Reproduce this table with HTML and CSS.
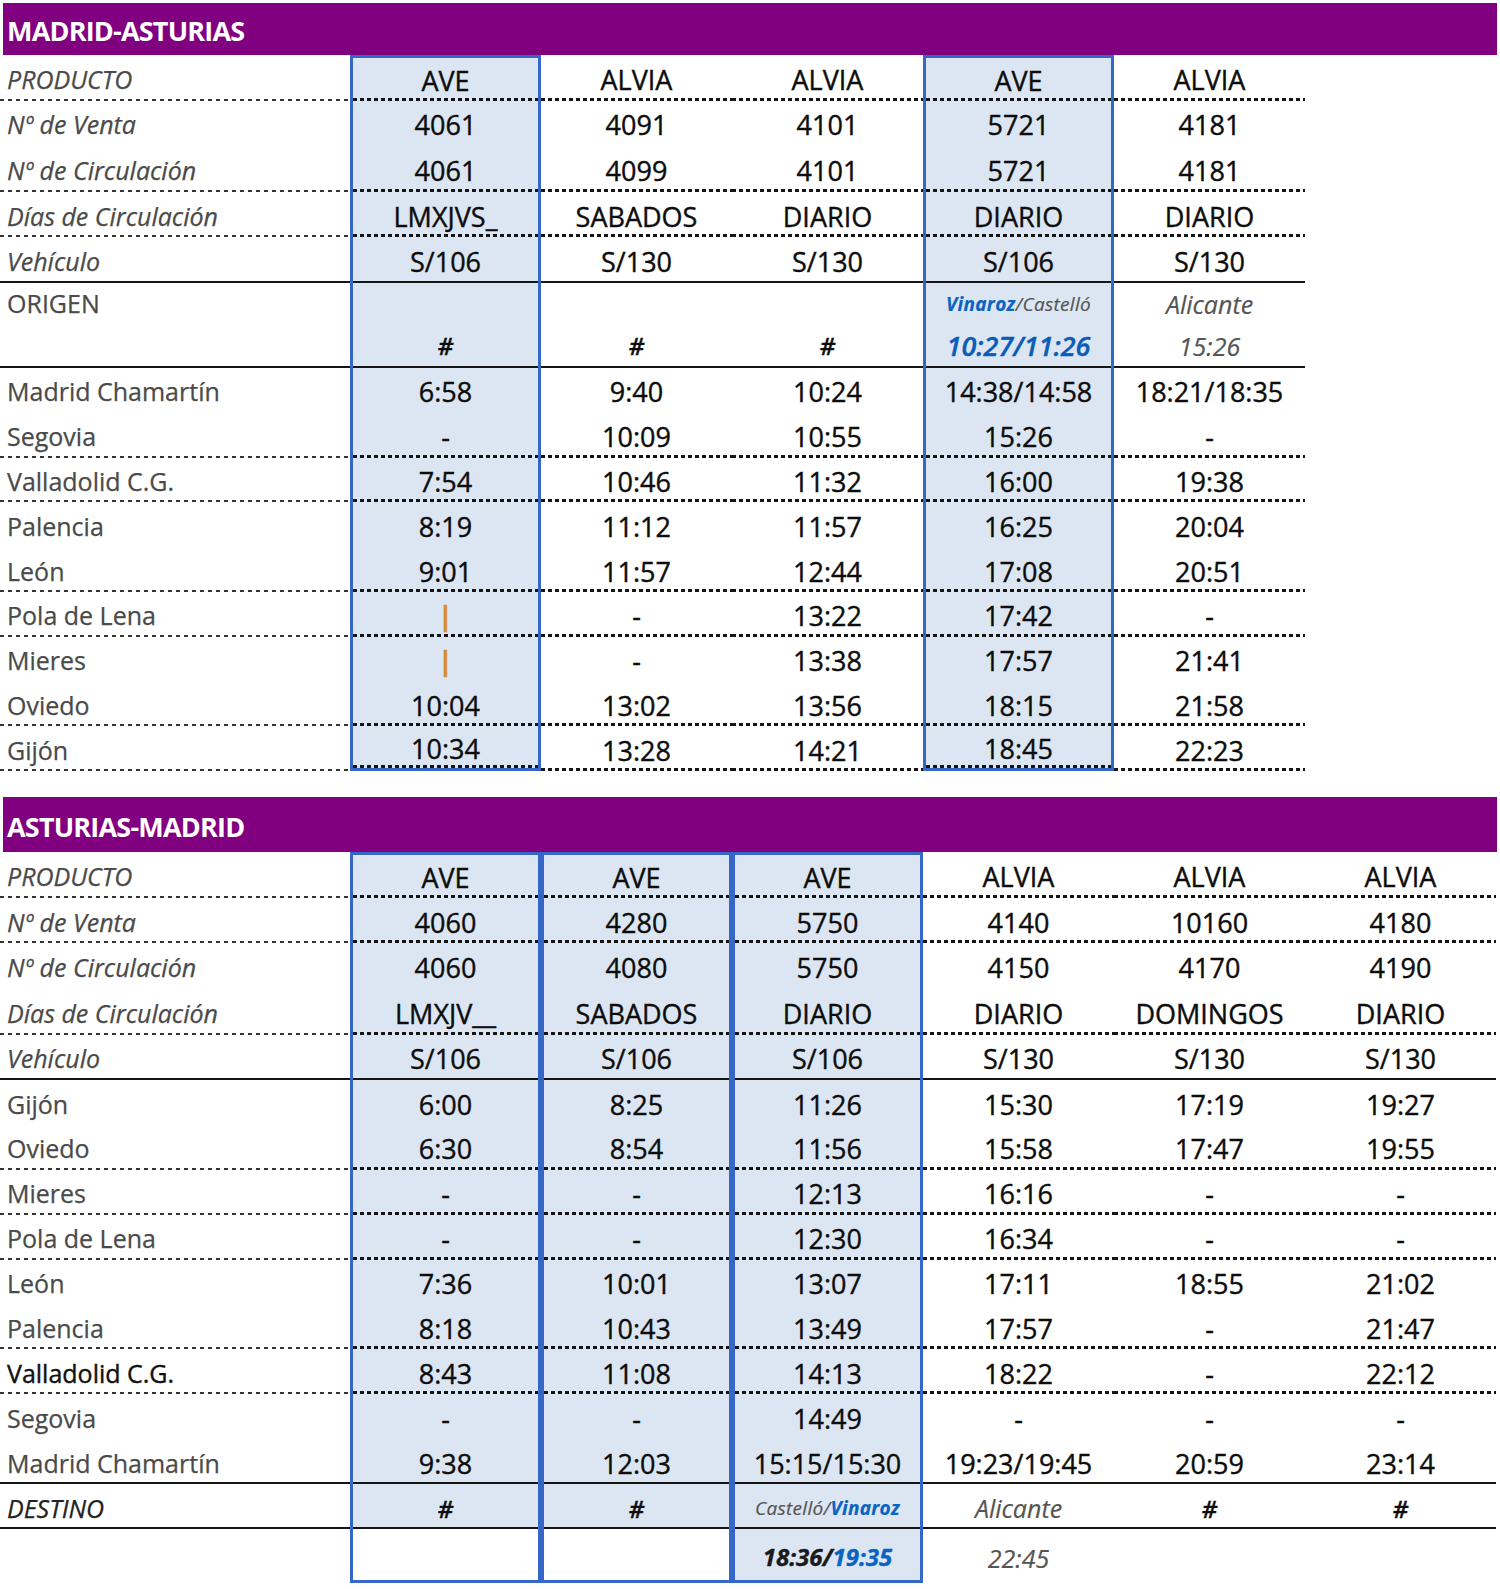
FILE: index.html
```html
<!DOCTYPE html>
<html lang="es">
<head>
<meta charset="utf-8">
<title>Madrid-Asturias</title>
<link rel="stylesheet" href="styles.css">
</head>
<body>
<div class="page">
  <div class="band">MADRID-ASTURIAS</div>
  <div class="sec top">
    <div class="r hd first dot"><div class="l it">PRODUCTO</div><div class="c">AVE</div><div class="c">ALVIA</div><div class="c">ALVIA</div><div class="c">AVE</div><div class="c">ALVIA</div></div>
    <div class="r hd"><div class="l it">Nº de Venta</div><div class="c">4061</div><div class="c">4091</div><div class="c">4101</div><div class="c">5721</div><div class="c">4181</div></div>
    <div class="r hd dot"><div class="l it">Nº de Circulación</div><div class="c">4061</div><div class="c">4099</div><div class="c">4101</div><div class="c">5721</div><div class="c">4181</div></div>
    <div class="r hd dot"><div class="l it">Días de Circulación</div><div class="c">LMXJVS_</div><div class="c">SABADOS</div><div class="c">DIARIO</div><div class="c">DIARIO</div><div class="c">DIARIO</div></div>
    <div class="r hd solid"><div class="l it">Vehículo</div><div class="c">S/106</div><div class="c">S/130</div><div class="c">S/130</div><div class="c">S/106</div><div class="c">S/130</div></div>
    <div class="r origin solid">
      <div class="l top-l">ORIGEN</div>
      <div class="c two"><span></span><span class="hash">#</span></div>
      <div class="c two"><span></span><span class="hash">#</span></div>
      <div class="c two"><span></span><span class="hash">#</span></div>
      <div class="c two"><span class="small"><b class="blue">Vinaroz</b>/Castelló</span><span class="bluetime">10:27/11:26</span></div>
      <div class="c two"><span class="grayit">Alicante</span><span class="grayit">15:26</span></div>
    </div>
    <div class="r st"><div class="l">Madrid Chamartín</div><div class="c">6:58</div><div class="c">9:40</div><div class="c">10:24</div><div class="c">14:38/14:58</div><div class="c">18:21/18:35</div></div>
    <div class="r st dot"><div class="l">Segovia</div><div class="c">-</div><div class="c">10:09</div><div class="c">10:55</div><div class="c">15:26</div><div class="c">-</div></div>
    <div class="r st dot"><div class="l">Valladolid C.G.</div><div class="c">7:54</div><div class="c">10:46</div><div class="c">11:32</div><div class="c">16:00</div><div class="c">19:38</div></div>
    <div class="r st"><div class="l">Palencia</div><div class="c">8:19</div><div class="c">11:12</div><div class="c">11:57</div><div class="c">16:25</div><div class="c">20:04</div></div>
    <div class="r st dot"><div class="l">León</div><div class="c">9:01</div><div class="c">11:57</div><div class="c">12:44</div><div class="c">17:08</div><div class="c">20:51</div></div>
    <div class="r st dot"><div class="l">Pola de Lena</div><div class="c"><span class="bar">|</span></div><div class="c">-</div><div class="c">13:22</div><div class="c">17:42</div><div class="c">-</div></div>
    <div class="r st"><div class="l">Mieres</div><div class="c"><span class="bar">|</span></div><div class="c">-</div><div class="c">13:38</div><div class="c">17:57</div><div class="c">21:41</div></div>
    <div class="r st dot"><div class="l">Oviedo</div><div class="c">10:04</div><div class="c">13:02</div><div class="c">13:56</div><div class="c">18:15</div><div class="c">21:58</div></div>
    <div class="r st dot last"><div class="l">Gijón</div><div class="c">10:34</div><div class="c">13:28</div><div class="c">14:21</div><div class="c">18:45</div><div class="c">22:23</div></div>
  </div>

  <div class="band band2">ASTURIAS-MADRID</div>
  <div class="sec bot">
    <div class="r hd first dot"><div class="l it">PRODUCTO</div><div class="c">AVE</div><div class="c">AVE</div><div class="c">AVE</div><div class="c">ALVIA</div><div class="c">ALVIA</div><div class="c">ALVIA</div></div>
    <div class="r hd dot"><div class="l it">Nº de Venta</div><div class="c">4060</div><div class="c">4280</div><div class="c">5750</div><div class="c">4140</div><div class="c">10160</div><div class="c">4180</div></div>
    <div class="r hd"><div class="l it">Nº de Circulación</div><div class="c">4060</div><div class="c">4080</div><div class="c">5750</div><div class="c">4150</div><div class="c">4170</div><div class="c">4190</div></div>
    <div class="r hd dot"><div class="l it">Días de Circulación</div><div class="c">LMXJV__</div><div class="c">SABADOS</div><div class="c">DIARIO</div><div class="c">DIARIO</div><div class="c">DOMINGOS</div><div class="c">DIARIO</div></div>
    <div class="r hd solid"><div class="l it">Vehículo</div><div class="c">S/106</div><div class="c">S/106</div><div class="c">S/106</div><div class="c">S/130</div><div class="c">S/130</div><div class="c">S/130</div></div>
    <div class="r st2"><div class="l">Gijón</div><div class="c">6:00</div><div class="c">8:25</div><div class="c">11:26</div><div class="c">15:30</div><div class="c">17:19</div><div class="c">19:27</div></div>
    <div class="r st2 dot"><div class="l">Oviedo</div><div class="c">6:30</div><div class="c">8:54</div><div class="c">11:56</div><div class="c">15:58</div><div class="c">17:47</div><div class="c">19:55</div></div>
    <div class="r st2 dot"><div class="l">Mieres</div><div class="c">-</div><div class="c">-</div><div class="c">12:13</div><div class="c">16:16</div><div class="c">-</div><div class="c">-</div></div>
    <div class="r st2 dot"><div class="l">Pola de Lena</div><div class="c">-</div><div class="c">-</div><div class="c">12:30</div><div class="c">16:34</div><div class="c">-</div><div class="c">-</div></div>
    <div class="r st2"><div class="l">León</div><div class="c">7:36</div><div class="c">10:01</div><div class="c">13:07</div><div class="c">17:11</div><div class="c">18:55</div><div class="c">21:02</div></div>
    <div class="r st2 dot"><div class="l">Palencia</div><div class="c">8:18</div><div class="c">10:43</div><div class="c">13:49</div><div class="c">17:57</div><div class="c">-</div><div class="c">21:47</div></div>
    <div class="r st2 dot"><div class="l dark">Valladolid C.G.</div><div class="c">8:43</div><div class="c">11:08</div><div class="c">14:13</div><div class="c">18:22</div><div class="c">-</div><div class="c">22:12</div></div>
    <div class="r st2"><div class="l">Segovia</div><div class="c">-</div><div class="c">-</div><div class="c">14:49</div><div class="c">-</div><div class="c">-</div><div class="c">-</div></div>
    <div class="r st2 solid"><div class="l">Madrid Chamartín</div><div class="c">9:38</div><div class="c">12:03</div><div class="c">15:15/15:30</div><div class="c">19:23/19:45</div><div class="c">20:59</div><div class="c">23:14</div></div>
    <div class="r dest solid"><div class="l it darkit">DESTINO</div><div class="c"><span class="hash">#</span></div><div class="c"><span class="hash">#</span></div><div class="c"><span class="small">Castelló/<b class="blue">Vinaroz</b></span></div><div class="c"><span class="grayit">Alicante</span></div><div class="c"><span class="hash">#</span></div><div class="c"><span class="hash">#</span></div></div>
    <div class="r tail last"><div class="l"></div><div class="c"></div><div class="c"></div><div class="c"><span class="mixtime">18:36/<span class="blue">19:35</span></span></div><div class="c"><span class="grayit">22:45</span></div><div class="c"></div><div class="c"></div></div>
  </div>
</div>
</body>
</html>
```

FILE: styles.css
```css
* { box-sizing: border-box; margin: 0; padding: 0; }

html, body {
  width: 1500px;
  height: 1589px;
  background: #ffffff;
  overflow: hidden;
}

body {
  font-family: "Open Sans", "Liberation Sans", sans-serif;
  color: #111111;
}

.page {
  padding-top: 3px;
}

.band {
  margin-left: 3px;
  width: 1494px;
  height: 52px;
  background: #800080;
  color: #ffffff;
  font-weight: 700;
  font-size: 27px;
  letter-spacing: -0.8px;
  display: flex;
  align-items: center;
  padding-left: 4px;
  padding-top: 3px;
}

.band2 {
  margin-top: 26px;
  height: 55px;
}

.sec .r {
  display: grid;
  grid-template-columns: 350px repeat(6, 191px);
}

.r.hd { height: 45.6px; }
.r.origin { height: 85px; }
.r.st { height: 44.8px; }
.r.st2 { height: 44.9px; }
.r.dest { height: 45px; }
.r.tail { height: 54px; }

.l, .c {
  display: flex;
  align-items: center;
  white-space: nowrap;
  background-repeat: no-repeat;
  background-position: left bottom;
}

.l {
  padding-left: 7px;
  padding-top: 2px;
  font-size: 25px;
  color: #4a4a4a;
  -webkit-text-stroke: 0.25px currentColor;
}

.l.it { font-style: italic; }
.l.dark { color: #111111; -webkit-text-stroke: 0.4px currentColor; }
.l.darkit { color: #222222; }

.l.top-l {
  align-items: flex-start;
  padding-top: 3px;
}

.c {
  justify-content: center;
  padding-top: 3px;
  font-size: 27px;
  color: #0d0d0d;
  -webkit-text-stroke: 0.4px currentColor;
}

/* dotted / dashed separators */
.dot > .c {
  background-image: linear-gradient(to right, #151515 55%, transparent 55%);
  background-size: 7px 3px;
  background-repeat: repeat-x;
}

.dot > .l {
  background-image: linear-gradient(to right, #333333 55%, transparent 55%);
  background-size: 8px 2px;
  background-repeat: repeat-x;
}

.solid > .l,
.solid > .c {
  background-image: linear-gradient(#151515, #151515);
  background-size: 100% 2px;
  background-repeat: no-repeat;
}

/* highlighted (blue framed) columns */
.top .r > :nth-child(2),
.top .r > :nth-child(5),
.bot .r > :nth-child(2),
.bot .r > :nth-child(3),
.bot .r > :nth-child(4) {
  background-color: #dce6f2;
  border-left: 3px solid #3467c6;
  border-right: 3px solid #3467c6;
}

.top .r.first > :nth-child(2),
.top .r.first > :nth-child(5),
.bot .r.first > :nth-child(2),
.bot .r.first > :nth-child(3),
.bot .r.first > :nth-child(4) {
  border-top: 3px solid #3467c6;
}

.top .r.last > :nth-child(2),
.top .r.last > :nth-child(5),
.bot .r.last > :nth-child(2),
.bot .r.last > :nth-child(3),
.bot .r.last > :nth-child(4) {
  border-bottom: 3px solid #3467c6;
}

.bot .r.last > :nth-child(2),
.bot .r.last > :nth-child(3) {
  background-color: #ffffff;
}

/* origin row: two stacked lines */
.c.two {
  display: grid;
  grid-template-rows: 42px 42px;
  align-items: center;
  justify-items: center;
  padding-top: 0;
}

.hash {
  font-weight: 600;
  font-size: 24px;
  font-style: italic;
}

.small {
  font-size: 19px;
  font-style: italic;
  color: #555555;
  letter-spacing: 0.3px;
  -webkit-text-stroke: 0.2px currentColor;
}

.blue {
  color: #0a63c2;
  font-weight: 700;
}

.bluetime {
  font-size: 27px;
  font-style: italic;
  font-weight: 600;
  color: #0b5cb8;
}

.grayit {
  font-style: italic;
  color: #555555;
  font-size: 25px;
  -webkit-text-stroke: 0.2px currentColor;
}

.mixtime {
  font-style: italic;
  font-weight: 700;
  font-size: 24px;
  color: #1a1a1a;
}

.bar {
  color: #d98a2a;
  font-weight: 700;
  font-size: 26px;
}
```
